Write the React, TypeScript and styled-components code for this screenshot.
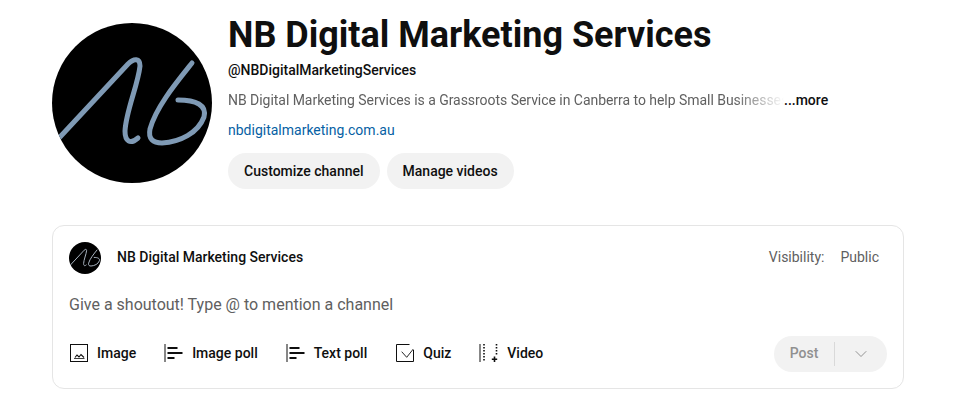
import React from 'react';
import styled, { createGlobalStyle } from 'styled-components';
import { ChevronDown } from 'lucide-react';

const GlobalStyle = createGlobalStyle`
    html, body {
        margin: 0;
        padding: 0;
        background: #fff;
        font-family: Roboto, "Noto Sans", sans-serif;
        color: #0f0f0f;
    }
`;

const Page = styled.div`
    width: 954px;
    height: 412px;
    box-sizing: border-box;
    padding: 23px 50px 0 52px;
    overflow: hidden;
`;

const Header = styled.div`
    display: flex;
    gap: 16px;
`;

const Avatar = styled.div<{ $size: number }>`
    width: ${(p) => p.$size}px;
    height: ${(p) => p.$size}px;
    border-radius: 50%;
    background: #000;
    flex-shrink: 0;
    overflow: hidden;
    svg {
        display: block;
        width: 100%;
        height: 100%;
    }
`;

const Info = styled.div`
    display: flex;
    flex-direction: column;
    align-items: flex-start;
    min-width: 0;
`;

const Title = styled.h1`
    margin: -10px 0 0;
    font-size: 36px;
    line-height: 44px;
    font-weight: 700;
`;

const Handle = styled.div`
    margin-top: 3px;
    font-size: 14px;
    line-height: 20px;
    font-weight: 500;
`;

const DescRow = styled.div`
    margin-top: 10px;
    display: flex;
    font-size: 14px;
    line-height: 20px;
`;

const Desc = styled.div`
    width: 556px;
    white-space: nowrap;
    letter-spacing: -0.04px;
    color: #606060;
    -webkit-mask-image: linear-gradient(to right, #000 91%, transparent 100%);
    mask-image: linear-gradient(to right, #000 91%, transparent 100%);
`;

const More = styled.span`
    font-weight: 500;
    color: #0f0f0f;
`;

const Link = styled.a`
    margin-top: 10px;
    font-size: 14px;
    line-height: 20px;
    color: #065fa4;
`;

const Buttons = styled.div`
    margin-top: 13px;
    display: flex;
    gap: 7px;
`;

const PillButton = styled.button`
    height: 36px;
    padding: 0 16px;
    border: 0;
    border-radius: 18px;
    background: #f2f2f2;
    color: #0f0f0f;
    font-family: inherit;
    font-size: 14px;
    font-weight: 500;
`;

const Card = styled.div`
    margin-top: 36px;
    height: 164px;
    box-sizing: border-box;
    border: 1px solid #e5e5e5;
    border-radius: 12px;
    padding: 16px;
    display: flex;
    flex-direction: column;
`;

const CardTop = styled.div`
    display: flex;
    align-items: center;
    height: 32px;
`;

const CardName = styled.div`
    margin: 0 0 2px 16px;
    font-size: 14px;
    font-weight: 500;
`;

const Visibility = styled.div`
    margin: 0 8px 2px auto;
    display: flex;
    gap: 16px;
    font-size: 14px;
    color: #606060;
`;

const Prompt = styled.div`
    margin-top: 20px;
    font-size: 16px;
    line-height: 22px;
    color: #606060;
`;

const Actions = styled.div`
    margin-top: 20px;
    display: flex;
    align-items: center;
    justify-content: space-between;
`;

const Tools = styled.div`
    display: flex;
    align-items: center;
    gap: 28px;
    margin-top: -2px;
`;

const Tool = styled.div`
    display: flex;
    align-items: center;
    gap: 8px;
    font-size: 14px;
    font-weight: 500;
    height: 36px;
    svg {
        display: block;
        width: 20px;
        height: 20px;
    }
`;

const PostGroup = styled.div`
    display: flex;
    align-items: center;
    width: 113px;
    height: 36px;
    border-radius: 18px;
    background: #f2f2f2;
    color: #909090;
    font-size: 14px;
    font-weight: 500;
`;

const PostLabel = styled.div`
    width: 60px;
    height: 24px;
    line-height: 22px;
    text-align: center;
    border-right: 1px solid #d9d9d9;
`;

const PostArrow = styled.div`
    flex: 1;
    display: flex;
    justify-content: center;
`;

const Logo: React.FC<{ stroke: string; width: number }> = ({ stroke, width }) => (
    <svg viewBox="0 0 160 160" fill="none" stroke={stroke} strokeWidth={width} strokeLinecap="round" strokeLinejoin="round">
        <path d="M8 114 L76 41 C82 35 88 35 88 43 C86 62 74 88 73 108 C73 118 78 122 86 115" />
        <path d="M140 40 C124 60 104 84 98 106 C96 116 101 120 110 120 C128 119 146 110 152 94 C155 82 144 77 126 77" />
    </svg>
);

function PollIcon() {
    return (
        <svg viewBox="0 0 20 20" fill="none" stroke="#0f0f0f">
            <path d="M1 1 V19" strokeWidth="1" />
            <path d="M3.5 5 H13.5 M3.5 10 H18.5 M3.5 15 H10.5" strokeWidth="1.8" />
        </svg>
    );
}

const tools = [
    {
        label: 'Image',
        icon: (
            <svg viewBox="0 0 20 20" fill="none" stroke="#0f0f0f" strokeWidth="1">
                <rect x="1.5" y="1.5" width="17" height="17" />
                <path d="M6 14.5 L8 12 L10 14 L12 11.5 L15 14.5" strokeWidth="1.1" />
                <path d="M5 15.5 H15.5" strokeWidth="0.8" />
            </svg>
        ),
    },
    { label: 'Image poll', icon: <PollIcon /> },
    { label: 'Text poll', icon: <PollIcon /> },
    {
        label: 'Quiz',
        icon: (
            <svg viewBox="0 0 20 20" fill="none" stroke="#0f0f0f" strokeWidth="1">
                <path d="M18.5 7 V18.5 H1.5 V1.5 H14.5" />
                <path d="M6.7 8.7 L11.7 14.3 L18.3 6" strokeWidth="0.9" />
            </svg>
        ),
    },
    {
        label: 'Video',
        icon: (
            <svg viewBox="0 0 20 20" fill="none" stroke="#0f0f0f">
                <path d="M1 1 V19" strokeWidth="1" />
                <path d="M5 1 V19" strokeWidth="1.6" strokeDasharray="1.6 1.4" />
                <path d="M17.5 1 V12.5" strokeWidth="1.6" strokeDasharray="1.6 1.4" />
                <path d="M15.5 13.5 V19 M12.8 16.2 H18.2" strokeWidth="1.6" />
            </svg>
        ),
    },
];

const App: React.FC = () => {
    return (
        <Page>
            <GlobalStyle />
            <Header>
                <Avatar $size={160}>
                    <Logo stroke="#7f9ab5" width={5} />
                </Avatar>
                <Info>
                    <Title>NB Digital Marketing Services</Title>
                    <Handle>@NBDigitalMarketingServices</Handle>
                    <DescRow>
                        <Desc>NB Digital Marketing Services is a Grassroots Service in Canberra to help Small Businesses</Desc>
                        <More>...more</More>
                    </DescRow>
                    <Link>nbdigitalmarketing.com.au</Link>
                    <Buttons>
                        <PillButton>Customize channel</PillButton>
                        <PillButton>Manage videos</PillButton>
                    </Buttons>
                </Info>
            </Header>
            <Card>
                <CardTop>
                    <Avatar $size={32}>
                        <Logo stroke="#a9b4c0" width={5} />
                    </Avatar>
                    <CardName>NB Digital Marketing Services</CardName>
                    <Visibility>
                        <span>Visibility:</span>
                        <span>Public</span>
                    </Visibility>
                </CardTop>
                <Prompt>Give a shoutout! Type @ to mention a channel</Prompt>
                <Actions>
                    <Tools>
                        {tools.map((tool) => (
                            <Tool key={tool.label}>
                                {tool.icon}
                                <span>{tool.label}</span>
                            </Tool>
                        ))}
                    </Tools>
                    <PostGroup>
                        <PostLabel>Post</PostLabel>
                        <PostArrow>
                            <ChevronDown size={20} strokeWidth={1} color="#808080" />
                        </PostArrow>
                    </PostGroup>
                </Actions>
            </Card>
        </Page>
    );
};

export default App;
